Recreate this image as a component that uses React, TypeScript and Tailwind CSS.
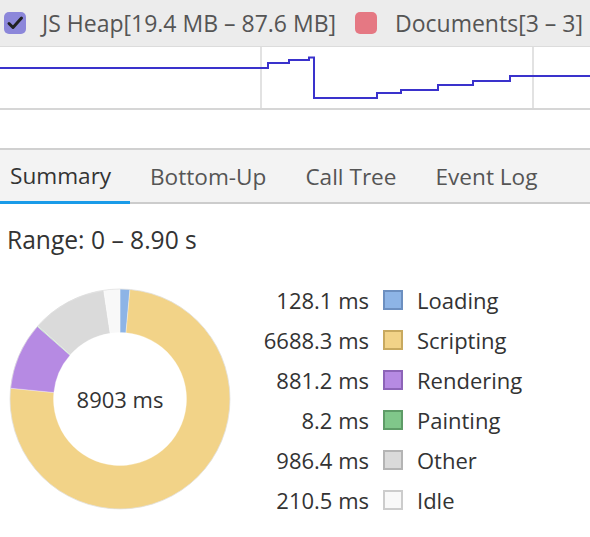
import React from "react";

const FONT = { fontFamily: '"Open Sans", "Noto Sans", sans-serif' };

const slices = [
  { label: "Loading", ms: 128.1, fill: "#8db4e6", border: "#6c8fc0" },
  { label: "Scripting", ms: 6688.3, fill: "#f2d388", border: "#c8a95f" },
  { label: "Rendering", ms: 881.2, fill: "#b68ae3", border: "#8d64b8" },
  { label: "Painting", ms: 8.2, fill: "#80c78a", border: "#5e9c67" },
  { label: "Other", ms: 986.4, fill: "#dadada", border: "#b4b4b4" },
  { label: "Idle", ms: 210.5, fill: "#f8f8f8", border: "#cccccc" },
];

// heap line, in chart coordinates (chart top = y 0)
const heapPts = [
  [0, 21], [268, 21], [268, 16], [289, 16], [289, 13], [309, 13], [309, 10.5],
  [314, 10.5], [314, 51], [377, 51], [377, 46], [401, 46], [401, 43], [438, 43],
  [438, 38], [473, 38], [473, 34], [510, 34], [510, 29], [590, 29],
];

function arc(cx: number, cy: number, r0: number, r1: number, a0: number, a1: number) {
  const p = (r: number, a: number) => [cx + r * Math.sin(a), cy - r * Math.cos(a)];
  const large = a1 - a0 > Math.PI ? 1 : 0;
  const [x0, y0] = p(r1, a0);
  const [x1, y1] = p(r1, a1);
  const [x2, y2] = p(r0, a1);
  const [x3, y3] = p(r0, a0);
  return `M${x0} ${y0}A${r1} ${r1} 0 ${large} 1 ${x1} ${y1}L${x2} ${y2}A${r0} ${r0} 0 ${large} 0 ${x3} ${y3}Z`;
}

function Donut() {
  const total = slices.reduce((s, x) => s + x.ms, 0);
  let a = 0;
  return (
    <div className="relative w-[222px] h-[222px]">
      <svg width="222" height="222" viewBox="0 0 222 222">
        {slices.map((s) => {
          const a0 = a;
          a += (s.ms / total) * Math.PI * 2;
          return (
            <path
              key={s.label}
              d={arc(111, 111, 66.5, 110, a0, a)}
              fill={s.fill}
              stroke="#ffffff"
              strokeOpacity={0.6}
              strokeWidth={0.5}
            />
          );
        })}
        <circle cx="111" cy="111" r="110" fill="none" stroke="#d8d8d8" strokeWidth="0.6" />
      </svg>
      <div className="absolute inset-0 flex items-center justify-center text-[22px] text-[#333]">
        8903 ms
      </div>
    </div>
  );
}

export default function App() {
  return (
    <div className="w-[590px] h-[537px] bg-white overflow-hidden" style={FONT}>
      <div className="h-[47px] bg-[#ececec] border-b border-[#dcdcdc] flex items-center text-[23px] text-[#555]">
        <span className="ml-[4px] w-[22px] h-[22px] rounded-[5px] bg-[#8c87da] flex items-center justify-center">
          <svg width="18" height="18" viewBox="0 0 18 18">
            <path d="M3 9.5l4 4L15.5 4" fill="none" stroke="#222" strokeWidth="3" strokeLinecap="round" strokeLinejoin="round" />
          </svg>
        </span>
        <span className="ml-[16px]">JS Heap[19.4 MB – 87.6 MB]</span>
        <span className="ml-[19px] w-[22px] h-[22px] rounded-[5px] bg-[#e57883]" />
        <span className="ml-[18px]">Documents[3 – 3]</span>
      </div>

      <div className="h-[63px] border-b-2 border-[#d6d6d6]">
        <svg width="590" height="61" viewBox="0 0 590 61" className="block">
          <line x1="261" y1="0" x2="261" y2="61" stroke="#e2e2e2" strokeWidth="2" />
          <line x1="533" y1="0" x2="533" y2="61" stroke="#e2e2e2" strokeWidth="2" />
          <polyline
            points={heapPts.map((p) => p.join(",")).join(" ")}
            fill="none"
            stroke="#3a32cc"
            strokeWidth="2"
          />
        </svg>
      </div>

      <div className="h-[38px]" />

      <div className="h-[56px] bg-[#f3f3f3] border-t-2 border-[#d0d0d0] flex items-stretch text-[22.6px] text-[#555]">
        <div className="w-[130px] pl-[10px] pt-[1px] flex items-center text-[#333] border-b-[3px] border-[#1a9be8]">Summary</div>
        <div className="flex-1 flex items-center gap-[39px] pl-[20px] pt-[1px] border-b-2 border-[#cccccc]">
          <span>Bottom-Up</span>
          <span>Call Tree</span>
          <span>Event Log</span>
        </div>
      </div>

      <div className="pl-[7px] pt-[19px] text-[24.6px] leading-[33px] text-[#333]">Range: 0 – 8.90 s</div>

      <div className="flex mt-[24px]">
        <div className="ml-[9px] mt-[8px]">
          <Donut />
        </div>
        <div className="ml-[28px] grid grid-cols-[110px_20px_auto] gap-x-[14px] auto-rows-[40px] items-center text-[22px] text-[#333]">
          {slices.map((s) => (
            <React.Fragment key={s.label}>
              <span className="text-right whitespace-nowrap">{s.ms} ms</span>
              <span className="w-[20px] h-[20px] border-2" style={{ background: s.fill, borderColor: s.border }} />
              <span>{s.label}</span>
            </React.Fragment>
          ))}
        </div>
      </div>
    </div>
  );
}
